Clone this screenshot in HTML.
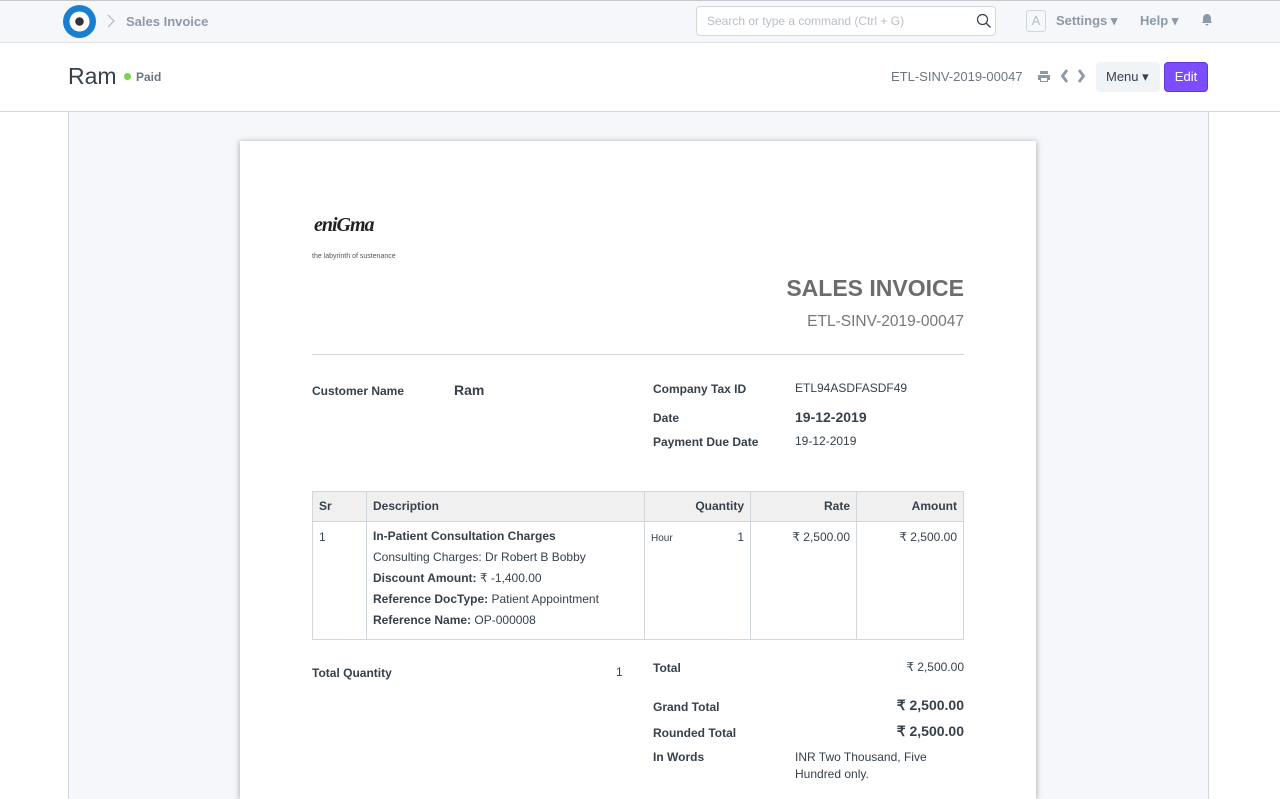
<!DOCTYPE html>
<html style="overflow:hidden;height:799px"><head><meta charset="utf-8"><style>
*{box-sizing:border-box;margin:0;padding:0}
body{width:1280px;height:799px;overflow:hidden;background:#fff;font-family:"Liberation Sans",sans-serif;color:#36414c;position:relative}
.a{position:absolute;white-space:nowrap}
.nav{position:absolute;left:0;top:0;width:1280px;height:43px;background:#f5f7fa;border-top:1px solid #c8c8c8;border-bottom:1px solid #e2e6ea}
.b{font-weight:bold}
.tbl{position:absolute;left:312px;top:491px;width:652px;border-collapse:collapse;font-size:12px;color:#36414c}
.tbl td,.tbl th{border:1px solid #d1d8dd;vertical-align:top;padding:8px 6px}
.tbl th{background:#f0f0f0;text-align:left;height:30px;padding:7px 6px}
.r{text-align:right!important}
</style></head><body>
<div class="nav"></div>
<svg class="a" style="left:63px;top:5px" width="33" height="33" viewBox="0 0 33 33"><circle cx="16.5" cy="16.5" r="16.5" fill="#1a7fd0"/><circle cx="16.5" cy="16.5" r="10" fill="#fff"/><circle cx="16.5" cy="16.5" r="4.3" fill="#333"/></svg>
<svg class="a" style="left:106px;top:14px" width="10" height="14"><path d="M2 1l6 6-6 6" stroke="#b8bfc6" stroke-width="1.3" fill="none"/></svg>
<div class="a b" style="left:126px;top:14px;font-size:13px;color:#8d99a6">Sales Invoice</div>
<div class="a" style="left:696px;top:6px;width:300px;height:30px;background:#fff;border:1px solid #d1d8dd;border-radius:4px"></div>
<div class="a" style="left:707px;top:14px;font-size:12px;color:#b8bfc6">Search or type a command (Ctrl + G)</div>
<svg class="a" style="left:976px;top:13px" width="16" height="16"><circle cx="6.5" cy="6.5" r="5" stroke="#36414c" stroke-width="1.2" fill="none"/><path d="M10 10l4.5 4.5" stroke="#36414c" stroke-width="1.3"/></svg>
<div class="a" style="left:1026px;top:10px;width:20px;height:22px;border:1px solid #d1d8dd;border-radius:3px;font-size:13px;color:#b8bfc6;text-align:center;line-height:20px">A</div>
<div class="a b" style="left:1056px;top:13px;font-size:13px;color:#8d99a6">Settings ▾</div>
<div class="a b" style="left:1140px;top:13px;font-size:13px;color:#8d99a6">Help ▾</div>
<svg class="a" style="left:1201px;top:13px" width="12" height="13"><path d="M6 1c-2.5 0-4 2-4 4.5v3L1 10h10l-1-1.5v-3C10 3 8.5 1 6 1zM4.5 11h3a1.5 1.5 0 01-3 0z" fill="#8d99a6"/></svg>

<div class="a" style="left:68px;top:63px;font-size:23px;color:#36414c">Ram</div>
<div class="a" style="left:124px;top:73px;width:7px;height:7px;border-radius:50%;background:#78d44a"></div>
<div class="a b" style="left:136px;top:70px;font-size:12px;color:#6c7680">Paid</div>
<div class="a" style="left:891px;top:69px;font-size:13px;color:#6c7680">ETL-SINV-2019-00047</div>
<svg class="a" style="left:1037px;top:70px" width="14" height="13"><path d="M3 1h8v3H3zM1 5h12v5h-2v2H3v-2H1z" fill="#8d99a6"/><rect x="4" y="8" width="6" height="3" fill="#fff"/></svg>
<svg class="a" style="left:1059px;top:68px" width="30" height="16"><path d="M8 2L3.5 8 8 14M20 2l4.5 6L20 14" stroke="#8d99a6" stroke-width="2.8" fill="none"/></svg>
<div class="a" style="left:1096px;top:62px;width:64px;height:30px;background:#f0f4f7;border-radius:4px;font-size:13px;color:#36414c;line-height:30px;padding-left:10px">Menu ▾</div>
<div class="a" style="left:1164px;top:62px;width:44px;height:30px;background:#7c4dff;border:1px solid #5e35e0;border-radius:4px;font-size:13px;color:#fff;line-height:28px;text-align:center">Edit</div>
<div class="a" style="left:0;top:111px;width:1280px;height:1px;background:#d1d8dd"></div>
<div class="a" style="left:68px;top:112px;width:1141px;height:690px;background:#f5f7fa;border-left:1px solid #d1d8dd;border-right:1px solid #d1d8dd"></div>
<div class="a" style="left:240px;top:141px;width:796px;height:658px;background:#fff;box-shadow:0 1px 6px rgba(0,0,0,.35)"></div>

<div class="a" style="left:314px;top:214px;font-family:'Liberation Serif',serif;font-size:20px;font-weight:bold;color:#222;letter-spacing:-1px;font-style:italic">eniGma</div>
<div class="a" style="left:312px;top:253px;font-size:7px;color:#555">the labyrinth of sustenance</div>
<div class="a b" style="right:316px;top:275px;font-size:23px;color:#6c6c6c">SALES INVOICE</div>
<div class="a" style="right:316px;top:313px;font-size:15.5px;color:#777">ETL-SINV-2019-00047</div>
<div class="a" style="left:312px;top:354px;width:652px;height:1px;background:#d1d8dd"></div>

<div class="a b" style="left:312px;top:384px;font-size:12px">Customer Name</div>
<div class="a b" style="left:454px;top:382px;font-size:14px">Ram</div>
<div class="a b" style="left:653px;top:382px;font-size:12px">Company Tax ID</div>
<div class="a" style="left:795px;top:381px;font-size:12px">ETL94ASDFASDF49</div>
<div class="a b" style="left:653px;top:411px;font-size:12px">Date</div>
<div class="a b" style="left:795px;top:409px;font-size:14px">19-12-2019</div>
<div class="a b" style="left:653px;top:435px;font-size:12px">Payment Due Date</div>
<div class="a" style="left:795px;top:434px;font-size:12px">19-12-2019</div>

<table class="tbl">
<tr><th style="width:54px">Sr</th><th style="width:278px">Description</th><th class="r" style="width:106px">Quantity</th><th class="r" style="width:106px">Rate</th><th class="r">Amount</th></tr>
<tr style="height:117px"><td>1</td><td style="line-height:21px;padding-top:4px"><b>In-Patient Consultation Charges</b><br>Consulting Charges: Dr Robert B Bobby<br><b>Discount Amount:</b> ₹ -1,400.00<br><b>Reference DocType:</b> Patient Appointment<br><b>Reference Name:</b> OP-000008</td><td><span style="font-size:10px">Hour</span><span style="float:right">1</span></td><td class="r">₹ 2,500.00</td><td class="r">₹ 2,500.00</td></tr>
</table>

<div class="a b" style="left:312px;top:666px;font-size:12px">Total Quantity</div>
<div class="a" style="left:616px;top:665px;font-size:12px">1</div>
<div class="a b" style="left:653px;top:661px;font-size:12px">Total</div>
<div class="a" style="right:316px;top:660px;font-size:12px">₹ 2,500.00</div>
<div class="a b" style="left:653px;top:700px;font-size:12px">Grand Total</div>
<div class="a b" style="right:316px;top:697px;font-size:14px">₹ 2,500.00</div>
<div class="a b" style="left:653px;top:726px;font-size:12px">Rounded Total</div>
<div class="a b" style="right:316px;top:723px;font-size:14px">₹ 2,500.00</div>
<div class="a b" style="left:653px;top:750px;font-size:12px">In Words</div>
<div class="a" style="left:795px;top:749px;font-size:12px;line-height:17px">INR Two Thousand, Five<br>Hundred only.</div>
</body></html>
